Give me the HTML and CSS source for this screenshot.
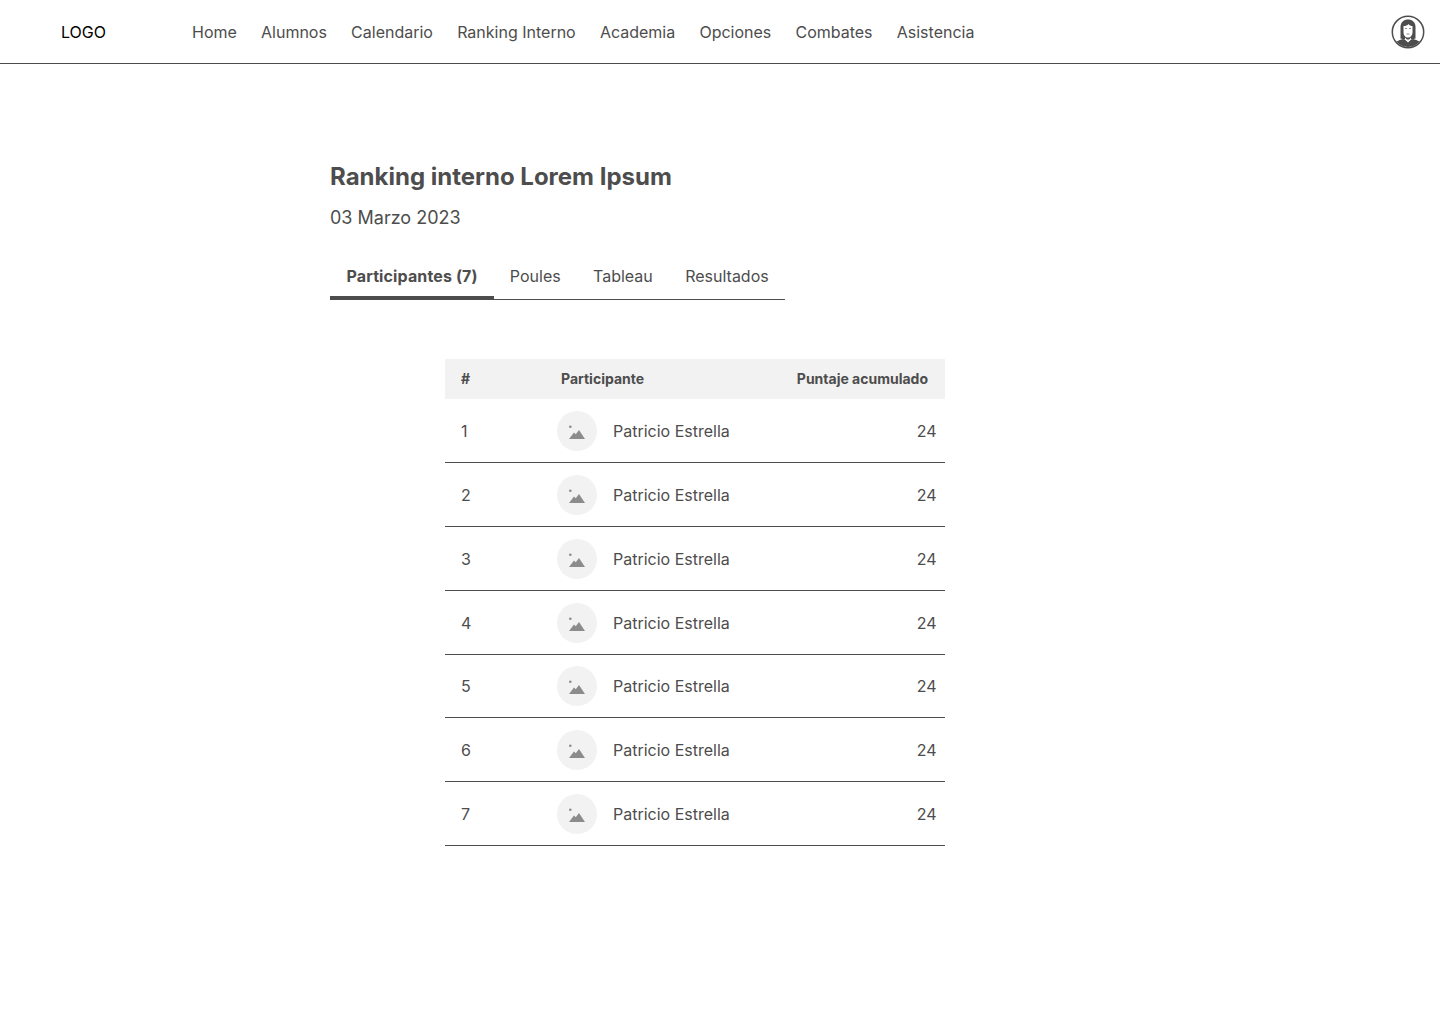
FILE: index.html
```html
<!DOCTYPE html>
<html lang="en">
<head>
  <meta charset="UTF-8">
  <title>Ranking interno</title>
  <link rel="stylesheet" href="styles.css">
</head>
<body>

  <!-- Navbar -->
  <header class="navbar">
    <div class="logo">LOGO</div>
    <nav class="nav-links">
      <a href="#">Home</a>
      <a href="#">Alumnos</a>
      <a href="#">Calendario</a>
      <a href="#">Ranking Interno</a>
      <a href="#">Academia</a>
      <a href="#">Opciones</a>
      <a href="#">Combates</a>
      <a href="#">Asistencia</a>
    </nav>
    <svg class="user-avatar" width="34" height="34" viewBox="0 0 34 34">
      <defs><clipPath id="avatarClip"><circle cx="17" cy="17" r="15"/></clipPath></defs>
      <circle cx="17" cy="17" r="15.700" fill="#fff" stroke="#4d4d4d" stroke-width="1.500"/>
      <g clip-path="url(#avatarClip)">
        <path d="M2 34c0-6 5-9 10-10l5 2 5-2c5 1 10 4 10 10z" fill="#4d4d4d"/>
        <path d="M9.500 23.500V12C9.500 7 13 4.500 17 4.500S24.500 7 24.500 12v11.500l-3.500 1H13z" fill="#4d4d4d"/>
        <path d="M12.500 11c2 0 4-.5 5-2 1 1.500 2.500 2 4 2v6c0 3.500-2 5.500-4.500 5.500s-4.500-2-4.500-5.500z" fill="#fff"/>
        <path d="M14 13.500h2M18 13.500h2M15.500 19h3" stroke="#8c8c8c" fill="none"/>
        <path d="M14 22.500l3 3.500 3-3.500v2l-3 3-3-3z" fill="#fff"/>
      </g>
    </svg>
  </header>

  <main class="content">
    <h1 class="page-title">Ranking interno Lorem Ipsum</h1>
    <p class="page-date">03 Marzo 2023</p>

    <!-- Tabs -->
    <div class="tabs">
      <a href="#" class="tab active">Participantes (7)</a>
      <a href="#" class="tab">Poules</a>
      <a href="#" class="tab">Tableau</a>
      <a href="#" class="tab">Resultados</a>
    </div>

    <table class="ranking">
      <thead>
        <tr>
          <th class="col-pos">#</th>
          <th class="col-name">Participante</th>
          <th class="col-score">Puntaje acumulado</th>
        </tr>
      </thead>
      <tbody>
        <tr>
          <td class="col-pos">1</td>
          <td class="col-name"><div class="person"><span class="thumb"><svg width="16" height="16" viewBox="0 0 16 16"><circle cx="1.300" cy="3.700" r="1.300"/><path d="M0 16 5 9.500 6.800 11.200 10 7 16 16z"/></svg></span>Patricio Estrella</div></td>
          <td class="col-score">24</td>
        </tr>
        <tr>
          <td class="col-pos">2</td>
          <td class="col-name"><div class="person"><span class="thumb"><svg width="16" height="16" viewBox="0 0 16 16"><circle cx="1.300" cy="3.700" r="1.300"/><path d="M0 16 5 9.500 6.800 11.200 10 7 16 16z"/></svg></span>Patricio Estrella</div></td>
          <td class="col-score">24</td>
        </tr>
        <tr>
          <td class="col-pos">3</td>
          <td class="col-name"><div class="person"><span class="thumb"><svg width="16" height="16" viewBox="0 0 16 16"><circle cx="1.300" cy="3.700" r="1.300"/><path d="M0 16 5 9.500 6.800 11.200 10 7 16 16z"/></svg></span>Patricio Estrella</div></td>
          <td class="col-score">24</td>
        </tr>
        <tr>
          <td class="col-pos">4</td>
          <td class="col-name"><div class="person"><span class="thumb"><svg width="16" height="16" viewBox="0 0 16 16"><circle cx="1.300" cy="3.700" r="1.300"/><path d="M0 16 5 9.500 6.800 11.200 10 7 16 16z"/></svg></span>Patricio Estrella</div></td>
          <td class="col-score">24</td>
        </tr>
        <tr>
          <td class="col-pos">5</td>
          <td class="col-name"><div class="person"><span class="thumb"><svg width="16" height="16" viewBox="0 0 16 16"><circle cx="1.300" cy="3.700" r="1.300"/><path d="M0 16 5 9.500 6.800 11.200 10 7 16 16z"/></svg></span>Patricio Estrella</div></td>
          <td class="col-score">24</td>
        </tr>
        <tr>
          <td class="col-pos">6</td>
          <td class="col-name"><div class="person"><span class="thumb"><svg width="16" height="16" viewBox="0 0 16 16"><circle cx="1.300" cy="3.700" r="1.300"/><path d="M0 16 5 9.500 6.800 11.200 10 7 16 16z"/></svg></span>Patricio Estrella</div></td>
          <td class="col-score">24</td>
        </tr>
        <tr>
          <td class="col-pos">7</td>
          <td class="col-name"><div class="person"><span class="thumb"><svg width="16" height="16" viewBox="0 0 16 16"><circle cx="1.300" cy="3.700" r="1.300"/><path d="M0 16 5 9.500 6.800 11.200 10 7 16 16z"/></svg></span>Patricio Estrella</div></td>
          <td class="col-score">24</td>
        </tr>
      </tbody>
    </table>
  </main>

</body>
</html>
```

FILE: styles.css
```css
* {
  margin: 0;
  padding: 0;
  box-sizing: border-box;
  font-family: Inter, 'Noto Sans', sans-serif;
}

body {
  background-color: #ffffff;
  color: #4d4d4d;
  font-size: 16px;
}

a {
  color: inherit;
  text-decoration: none;
}

.navbar {
  display: flex;
  align-items: center;
  height: 64px;
  padding: 0 15px 0 61px;
  border-bottom: 1px solid #4d4d4d;
}

.logo {
  width: 131px;
  color: #000000;
}

.nav-links {
  display: flex;
  gap: 24.200px;
  flex: 1;
}

.content {
  padding: 98px 0 0 330px;
}

.page-title {
  font-size: 24px;
  font-weight: 700;
  line-height: 29px;
}

.page-date {
  margin-top: 16px;
  font-size: 18px;
  line-height: 22px;
}

.tabs {
  display: flex;
  width: 455px;
  margin-top: 23px;
  border-bottom: 1px solid #4d4d4d;
}

.tab {
  padding: 14px 16.200px 10px;
  line-height: 20px;
  white-space: nowrap;
}

.tab.active {
  padding: 14px 16px 10px 16.500px;
  font-weight: 700;
  letter-spacing: 0.120px;
  border-bottom: 4px solid #4d4d4d;
  margin-bottom: -1px;
}

.ranking {
  width: 500px;
  margin: 59px 0 0 115px;
  border-collapse: separate;
  border-spacing: 0;
  table-layout: fixed;
}

.ranking th {
  height: 40px;
  padding-bottom: 2px;
  background-color: #f2f2f2;
  font-size: 14px;
  font-weight: 700;
  text-align: left;
}

.ranking td {
  height: 64px;
  padding-top: 1px;
  border-bottom: 1px solid #4d4d4d;
}

.ranking tbody tr:nth-child(5) td {
  height: 63px;
  padding-top: 0;
}

.col-pos {
  width: 112px;
  padding-left: 16px;
}

.ranking th.col-score {
  width: 190px;
  padding-right: 17px;
  text-align: right;
}

.ranking td.col-score {
  padding-right: 8.500px;
  text-align: right;
}

.ranking th.col-name {
  padding-left: 4px;
}

.person {
  display: flex;
  align-items: center;
  gap: 16px;
}

.thumb {
  display: flex;
  justify-content: center;
  align-items: center;
  width: 40px;
  height: 40px;
  border-radius: 50%;
  background-color: #f2f2f2;
}

.thumb svg {
  fill: #8c8c8c;
}
```
